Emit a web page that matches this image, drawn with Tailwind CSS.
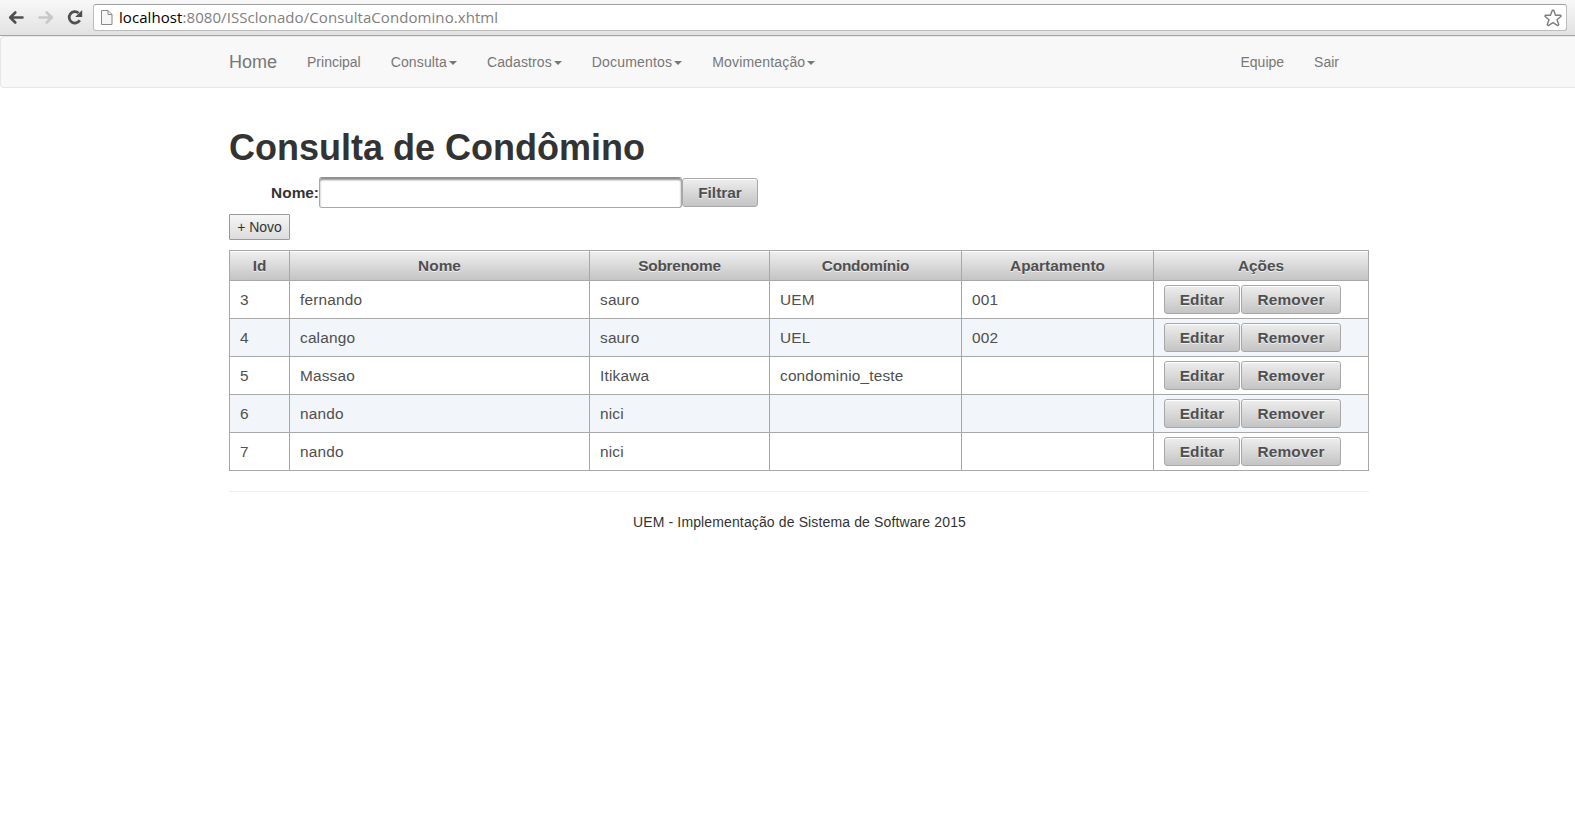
<!DOCTYPE html>
<html lang="pt-BR">
<head>
<meta charset="utf-8">
<title>Consulta de Condômino</title>
<script src="https://cdn.jsdelivr.net/npm/@tailwindcss/browser@4"></script>
</head>
<body class="bg-white font-['Liberation_Sans',Arial,sans-serif] text-sm text-[#333] overflow-hidden">
<header class="flex h-9 items-start border-b border-[#a5a5a5] bg-linear-to-b from-[#f8f8f8] to-[#e2e2e2] pt-1 pl-2">
  <svg class="mt-[6px] h-4 w-4 shrink-0" viewBox="0 0 16 16" fill="none" stroke="#4f4f4f" stroke-width="2.6" stroke-linejoin="round" stroke-linecap="round"><path d="M14.5 7.5H3M7.3 2.5 2.2 7.5l5.1 5"/></svg>
  <svg class="mt-[6px] ml-[14px] h-4 w-4 shrink-0" viewBox="0 0 16 16" fill="none" stroke="#c8c8c8" stroke-width="2.6" stroke-linejoin="round" stroke-linecap="round"><path d="M1.5 7.5H13M8.7 2.5l5.1 5-5.1 5"/></svg>
  <svg class="mt-[5px] ml-[13px] h-4 w-4 shrink-0" viewBox="0 0 16 16"><path d="M11.6 4A5.7 5.7 0 1 0 12.8 11.3" fill="none" stroke="#4f4f4f" stroke-width="2.7"/><path d="M15.2 1v7H8.2z" fill="#4f4f4f"/></svg>
  <div class="ml-[10px] flex h-[27px] w-[1474px] shrink-0 items-center rounded-[3px] border border-[#bdbdbd] border-t-[#a0a0a0] bg-white pr-1 pl-[7px]">
    <svg class="h-[15px] w-3 shrink-0" viewBox="0 0 12 15" fill="#f6f6f6" stroke="#8a8a8a"><path d="M.5.5h6.5l4 4v10H.5zM7 .5v4h4"/></svg>
    <div class="ml-[6px] grow pb-[2px] whitespace-nowrap font-['Open_Sans','Noto_Sans',sans-serif] text-[15px] leading-[22px] tracking-[0.07px] text-[#808080]"><span class="text-black">localhost</span>:8080/ISSclonado/ConsultaCondomino.xhtml</div>
    <svg class="h-[18px] w-[18px] shrink-0" viewBox="0 0 18 18" fill="#fff" stroke="#7d7d7d" stroke-width="1.4" stroke-linejoin="round"><path d="M8.3 1.2h1.4L11.5 6.2h5.2l.4 1.1-4.1 3.4 1.8 5-1.1.9L9 13.6l-4.7 3-1.1-.9 1.8-5L.9 7.3l.4-1.1h5.2z"/></svg>
  </div>
</header>
<nav class="h-[52px] rounded-l border border-r-0 border-[#e7e7e7] bg-[#f8f8f8] text-[#777]">
  <div class="ml-[228px] flex h-[50px] w-[1140px] items-center leading-5">
    <a class="mr-[30px] text-lg leading-5">Home</a>
    <div class="flex gap-[30px]">
      <a>Principal</a>
      <a class="flex items-center gap-[2px] tracking-[0.12px]">Consulta<i class="mt-px border-x-4 border-t-4 border-x-transparent border-t-[#777]"></i></a>
      <a class="flex items-center gap-[2px] tracking-[0.12px]">Cadastros<i class="mt-px border-x-4 border-t-4 border-x-transparent border-t-[#777]"></i></a>
      <a class="flex items-center gap-[2px] tracking-[0.18px]">Documentos<i class="mt-px border-x-4 border-t-4 border-x-transparent border-t-[#777]"></i></a>
      <a class="flex items-center gap-[2px] tracking-[0.17px]">Movimentação<i class="mt-px border-x-4 border-t-4 border-x-transparent border-t-[#777]"></i></a>
    </div>
    <div class="mr-[30px] ml-auto flex gap-[30px]"><a>Equipe</a><a>Sair</a></div>
  </div>
</nav>
<main class="ml-[229px] w-[1140px] pt-10">
  <h1 class="h-[49px] text-[36px] leading-[40px] font-bold">Consulta de Condômino</h1>
  <form class="flex h-[31px] items-center text-[15.4px]">
    <label class="w-[90px] pt-px text-right font-bold">Nome:</label>
    <div class="h-[31px] w-[363px] rounded-[3px] border border-[#a8a8a8] border-t-[#8f8f8f] bg-white shadow-[inset_0_2px_2px_#8f8f8f]"></div>
    <button type="button" class="h-[29px] w-[76px] rounded-[3px] border border-[#a8a8a8] bg-linear-to-b from-[#eee] to-[#c4c4c4] font-bold text-[#4f4f4f] inset-shadow-[0_1px_0_#fff] text-shadow-[0_1px_0_rgb(255_255_255/0.7)]">Filtrar</button>
  </form>
  <button type="button" class="mt-[6px] block h-[26px] w-[61px] rounded-[1px] border border-[#999] bg-linear-to-b from-[#f6f6f6] to-[#dcdcdc] text-[14px]">+ Novo</button>
  <table class="mt-[10px] w-[1140px] table-fixed border-separate border-spacing-0 border-t border-l border-[#a8a8a8] text-[15.4px] leading-5 text-[#4f4f4f]">
    <colgroup><col class="w-[60px]"><col class="w-[300px]"><col class="w-[180px]"><col class="w-[192px]"><col class="w-[192px]"><col class="w-[215px]"></colgroup>
    <thead>
      <tr class="h-[30px] text-shadow-[0_1px_0_rgb(255_255_255/0.7)] *:border-r *:border-b *:border-[#a8a8a8] *:bg-linear-to-b *:from-[#f0f0f0] *:to-[#c4c4c4] *:p-0 *:inset-shadow-[0_1px_0_#fff]"><th>Id</th><th>Nome</th><th class="tracking-[-0.25px]">Sobrenome</th><th class="tracking-[-0.25px]">Condomínio</th><th>Apartamento</th><th>Ações</th></tr>
    </thead>
    <tbody id="rows"></tbody>
  </table>
  <hr class="mt-5 border-[#eee]">
  <footer class="pt-5 pl-px text-center leading-5 tracking-[0.13px]">UEM - Implementação de Sistema de Software 2015</footer>
</main>
<script>
const btn = 'h-[29px] rounded-[3px] border border-[#a8a8a8] bg-linear-to-b from-[#eee] to-[#c4c4c4] font-bold inset-shadow-[0_1px_0_#fff] text-shadow-[0_1px_0_rgb(255_255_255/0.7)]';
const data = [['3','fernando','sauro','UEM','001'],['4','calango','sauro','UEL','002'],['5','Massao','Itikawa','condominio_teste',''],['6','nando','nici','',''],['7','nando','nici','','']];
document.getElementById('rows').innerHTML = data.map(r =>
  `<tr class="h-[38px] even:bg-[#f2f5f9] *:border-r *:border-b *:border-[#a8a8a8] *:py-0 *:px-[10px] tracking-[0.18px]">${r.map(c => `<td>${c}</td>`).join('')}<td><div class="flex gap-px"><button class="w-[76px] ${btn}">Editar</button><button class="w-[100px] ${btn}">Remover</button></div></td></tr>`).join('');
</script>
</body>
</html>
